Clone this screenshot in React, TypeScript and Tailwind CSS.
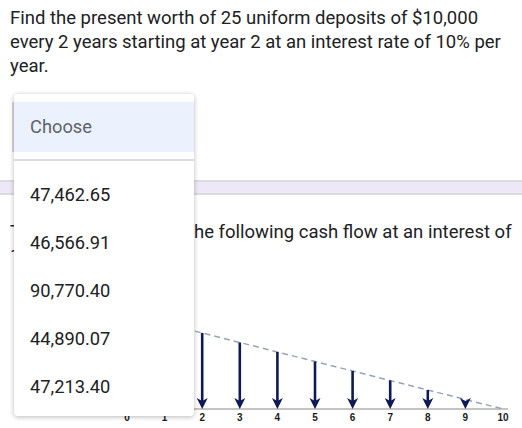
import React from "react";

const options = ["47,462.65", "46,566.91", "90,770.40", "44,890.07", "47,213.40"];

function CashFlow() {
  const xs = Array.from({ length: 11 }, (_, i) => 127 + 37.6 * i);
  const axisY = 141;
  const lineY = (i: number) => axisY - (10 - i) * 9.5;
  return (
    <svg width="522" height="160" viewBox="0 0 522 160" className="block">
      <line x1="100" y1={axisY} x2="508" y2={axisY} stroke="#c4c4c4" strokeWidth="2" />
      <line
        x1={xs[0]}
        y1={lineY(0)}
        x2={xs[10]}
        y2={axisY}
        stroke="#98a3ba"
        strokeWidth="1.5"
        strokeDasharray="6 4"
      />
      {xs.slice(2, 10).map((x, k) => {
        const i = k + 2;
        const top = lineY(i);
        return (
          <g key={i}>
            {top < axisY - 10 && (
              <line x1={x} y1={top} x2={x} y2={axisY - 8} stroke="#0f1a55" strokeWidth="2.6" />
            )}
            <polygon
              points={`${x - 5.5},${axisY - 11} ${x},${axisY - 8} ${x + 5.5},${axisY - 11} ${x},${axisY}`}
              fill="#0f1a55"
            />
          </g>
        );
      })}
      {xs.map((x, i) => (
        <text
          key={i}
          x={x}
          y={axisY + 12}
          textAnchor="middle"
          fontSize="10"
          fontWeight="700"
          fill="#1b1b1b"
          fontFamily="'Liberation Sans', Arial, sans-serif"
        >
          {i}
        </text>
      ))}
    </svg>
  );
}

export default function App() {
  return (
    <div
      className="relative w-[522px] h-[428px] overflow-hidden bg-white text-[#202124]"
      style={{ fontFamily: "Roboto, 'Liberation Sans', Arial, sans-serif" }}
    >
      <p className="px-[10px] pt-[6px] text-[18.5px] leading-[24px]">
        Find the present worth of 25 uniform deposits of $10,000 every 2 years starting at year 2 at an
        interest rate of 10% per year.
      </p>
      <div className="ml-[12px] mt-[24px] w-[2px] h-[50px] bg-[#d9d9d9]" />
      <div className="mt-[28px] h-[15px] border-y-2 border-[#dadce0] bg-[#ede8f7]" />
      <div className="px-[10px] pt-[25px] text-[18.5px] leading-[24px] whitespace-nowrap">
        <div className="flex">
          <span className="inline-block w-[184px] overflow-hidden">Then find the PW of</span>
          <span>he following cash flow at an interest of</span>
        </div>
        <div>10% per year.</div>
      </div>
      <CashFlow />

      <div className="absolute left-[14px] top-[94px] w-[180px] h-[322px] rounded-[4px] bg-white shadow-[0_1px_5px_rgba(0,0,0,0.28)] pt-[8px]">
        <div className="h-[50px] bg-[#ebf2fd] flex items-center pl-[16px] text-[18.3px] text-[#5f6368]">
          Choose
        </div>
        <div className="mt-[7px] h-[2px] bg-[#dadce0]" />
        <div className="pt-[10px]">
          {options.map((o) => (
            <div key={o} className="h-[48px] flex items-center pl-[16px] text-[18.3px] text-[#202124]">
              {o}
            </div>
          ))}
        </div>
      </div>
    </div>
  );
}
